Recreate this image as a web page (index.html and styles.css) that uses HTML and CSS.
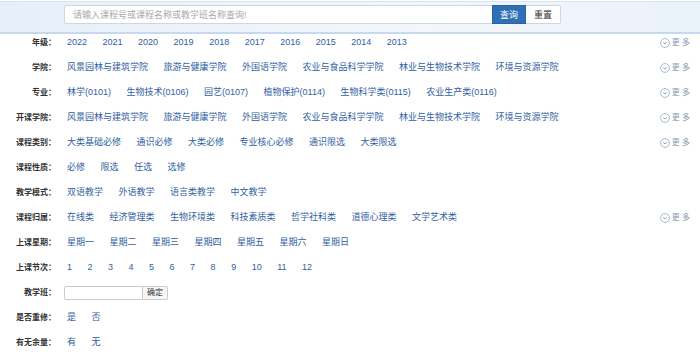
FILE: index.html
```
<!DOCTYPE html>
<html>
<head lang="zh-CN">
    <meta charset="UTF-8">
    <title>选课查询</title>
    <link rel="stylesheet" href="styles.css">
</head>
<body>
<div class="search-bar">
    <input class="search-input" type="text" placeholder="请输入课程号或课程名称或教学班名称查询!">
    <button class="btn btn-primary">查询</button>
    <button class="btn btn-reset">重置</button>
</div>

<div class="filters">
    <div class="row">
        <span class="label">年级：</span>
        <div class="values">
            <a>2022</a><a>2021</a><a>2020</a><a>2019</a><a>2018</a><a>2017</a><a>2016</a><a>2015</a><a>2014</a><a>2013</a>
        </div>
        <span class="more"><i class="more-icon"><svg width="10" height="10" viewBox="0 0 10 10"><circle cx="5" cy="5" r="4.4" fill="none" stroke="#9db1ca" stroke-width="0.9"/><path d="M3.2 4.3 L5 6 L6.8 4.3" fill="none" stroke="#7f97b5" stroke-width="0.9"/></svg></i>更 多</span>
    </div>
    <div class="row">
        <span class="label">学院：</span>
        <div class="values">
            <a>风景园林与建筑学院</a><a>旅游与健康学院</a><a>外国语学院</a><a>农业与食品科学学院</a><a>林业与生物技术学院</a><a>环境与资源学院</a>
        </div>
        <span class="more"><i class="more-icon"><svg width="10" height="10" viewBox="0 0 10 10"><circle cx="5" cy="5" r="4.4" fill="none" stroke="#9db1ca" stroke-width="0.9"/><path d="M3.2 4.3 L5 6 L6.8 4.3" fill="none" stroke="#7f97b5" stroke-width="0.9"/></svg></i>更 多</span>
    </div>
    <div class="row">
        <span class="label">专业：</span>
        <div class="values">
            <a>林学(0101)</a><a>生物技术(0106)</a><a>园艺(0107)</a><a>植物保护(0114)</a><a>生物科学类(0115)</a><a>农业生产类(0116)</a>
        </div>
        <span class="more"><i class="more-icon"><svg width="10" height="10" viewBox="0 0 10 10"><circle cx="5" cy="5" r="4.4" fill="none" stroke="#9db1ca" stroke-width="0.9"/><path d="M3.2 4.3 L5 6 L6.8 4.3" fill="none" stroke="#7f97b5" stroke-width="0.9"/></svg></i>更 多</span>
    </div>
    <div class="row">
        <span class="label">开课学院：</span>
        <div class="values">
            <a>风景园林与建筑学院</a><a>旅游与健康学院</a><a>外国语学院</a><a>农业与食品科学学院</a><a>林业与生物技术学院</a><a>环境与资源学院</a>
        </div>
        <span class="more"><i class="more-icon"><svg width="10" height="10" viewBox="0 0 10 10"><circle cx="5" cy="5" r="4.4" fill="none" stroke="#9db1ca" stroke-width="0.9"/><path d="M3.2 4.3 L5 6 L6.8 4.3" fill="none" stroke="#7f97b5" stroke-width="0.9"/></svg></i>更 多</span>
    </div>
    <div class="row">
        <span class="label">课程类别：</span>
        <div class="values">
            <a>大类基础必修</a><a>通识必修</a><a>大类必修</a><a>专业核心必修</a><a>通识限选</a><a>大类限选</a>
        </div>
        <span class="more"><i class="more-icon"><svg width="10" height="10" viewBox="0 0 10 10"><circle cx="5" cy="5" r="4.4" fill="none" stroke="#9db1ca" stroke-width="0.9"/><path d="M3.2 4.3 L5 6 L6.8 4.3" fill="none" stroke="#7f97b5" stroke-width="0.9"/></svg></i>更 多</span>
    </div>
    <div class="row">
        <span class="label">课程性质：</span>
        <div class="values">
            <a>必修</a><a>限选</a><a>任选</a><a>选修</a>
        </div>
    </div>
    <div class="row">
        <span class="label">教学模式：</span>
        <div class="values">
            <a>双语教学</a><a>外语教学</a><a>语言类教学</a><a>中文教学</a>
        </div>
    </div>
    <div class="row">
        <span class="label">课程归属：</span>
        <div class="values">
            <a>在线类</a><a>经济管理类</a><a>生物环境类</a><a>科技素质类</a><a>哲学社科类</a><a>道德心理类</a><a>文学艺术类</a>
        </div>
        <span class="more"><i class="more-icon"><svg width="10" height="10" viewBox="0 0 10 10"><circle cx="5" cy="5" r="4.4" fill="none" stroke="#9db1ca" stroke-width="0.9"/><path d="M3.2 4.3 L5 6 L6.8 4.3" fill="none" stroke="#7f97b5" stroke-width="0.9"/></svg></i>更 多</span>
    </div>
    <div class="row">
        <span class="label">上课星期：</span>
        <div class="values">
            <a>星期一</a><a>星期二</a><a>星期三</a><a>星期四</a><a>星期五</a><a>星期六</a><a>星期日</a>
        </div>
    </div>
    <div class="row">
        <span class="label">上课节次：</span>
        <div class="values">
            <a>1</a><a>2</a><a>3</a><a>4</a><a>5</a><a>6</a><a>7</a><a>8</a><a>9</a><a>10</a><a>11</a><a>12</a>
        </div>
    </div>
    <div class="row">
        <span class="label">教学班：</span>
        <div class="values">
            <input class="class-input" type="text"><button class="btn-ok">确定</button>
        </div>
    </div>
    <div class="row">
        <span class="label">是否重修：</span>
        <div class="values">
            <a>是</a><a>否</a>
        </div>
    </div>
    <div class="row">
        <span class="label">有无余量：</span>
        <div class="values">
            <a>有</a><a>无</a>
        </div>
    </div>
</div>
</body>
</html>
```

FILE: styles.css
```
*{
    margin: 0;
    padding: 0;
    box-sizing: border-box;
}
html,body{
    font-family: "Liberation Sans", "Noto Sans CJK SC", Arial, sans-serif;
    font-size: 9px;
    color: #333;
    background: #fff;
}
.search-bar{
    height: 33px;
    margin-top: 1px;
    border-top: 1px solid #d6e4f3;
    border-bottom: 2px solid #c6d9ee;
    background: linear-gradient(to right, #e6eff9 0%, #f3f7fc 60%, #eaf2fa 100%);
    display: flex;
    align-items: flex-start;
    padding: 3px 0 0 64px;
}
.search-input{
    width: 428px;
    height: 19px;
    border: 1px solid #cfd6de;
    border-right: none;
    border-radius: 2px 0 0 2px;
    padding: 0 8px;
    font-family: inherit;
    font-size: 9px;
    background: #fff;
    outline: none;
}
.search-input::placeholder{
    color: #a9a9a9;
}
.btn{
    height: 19px;
    width: 34px;
    font-family: inherit;
    font-size: 9px;
    border: 1px solid #cfd6de;
    cursor: pointer;
}
.btn-primary{
    background: #2f6fb3;
    border-color: #2a64a3;
    color: #fff;
}
.btn-reset{
    width: 35px;
    background: #fff;
    color: #333;
    border-left: none;
    border-radius: 0 2px 2px 0;
}
.filters{
    padding-right: 10px;
}
.row{
    display: flex;
    align-items: center;
    line-height: 17px;
    min-height: 17px;
    margin-bottom: 8px;
}
.label{
    width: 56px;
    flex-shrink: 0;
    text-align: right;
    font-size: 8px;
    font-weight: bold;
    color: #333;
    margin-right: 8px;
}
.values{
    flex: 1;
    display: flex;
    flex-wrap: wrap;
    align-items: center;
}
.values a{
    color: #30609f;
    padding-left: 3px;
    margin-right: 12.5px;
    cursor: pointer;
    white-space: nowrap;
}
.more{
    display: flex;
    align-items: center;
    color: #8a9bb3;
    font-size: 8px;
    cursor: pointer;
    white-space: nowrap;
}
.more-icon{
    display: flex;
    margin-right: 2px;
}
.class-input{
    width: 79px;
    height: 14px;
    border: 1px solid #ccc;
    border-radius: 2px 0 0 2px;
    outline: none;
}
.btn-ok{
    height: 14px;
    width: 25px;
    border: 1px solid #ccc;
    border-left: none;
    border-radius: 0 2px 2px 0;
    background: #f7f7f7;
    font-family: inherit;
    font-size: 8px;
    color: #333;
    line-height: 12px;
}
```
